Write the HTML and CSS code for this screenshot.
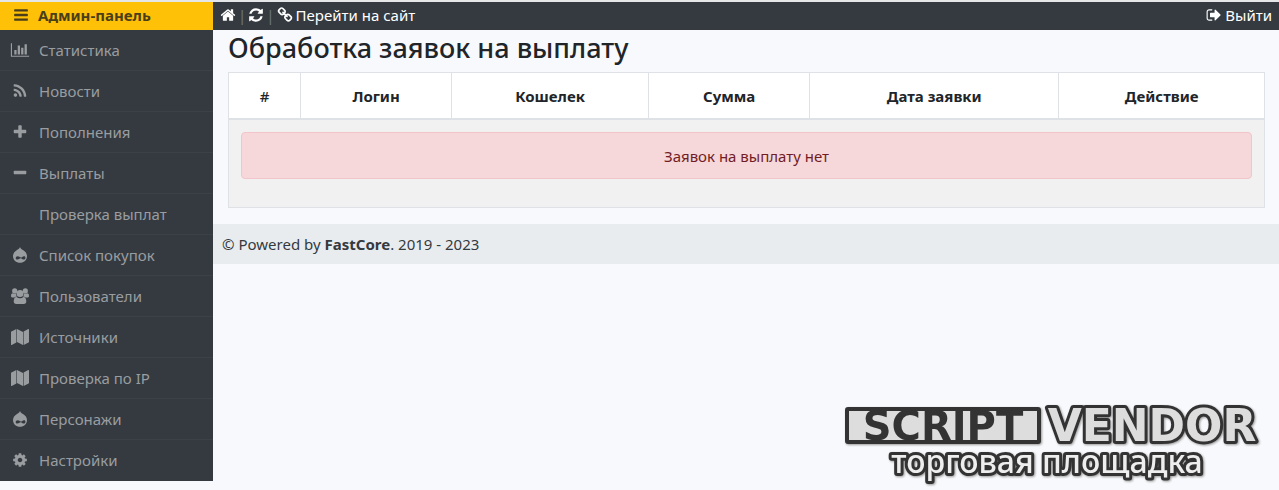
FILE: index.html
```html
<!DOCTYPE html>
<html lang="ru">
<head>
  <meta charset="UTF-8">
  <meta name="viewport" content="width=device-width, initial-scale=1.0">
  <title>Админ-панель</title>
  <link rel="stylesheet" href="styles.css">
</head>
<body>

  <!-- Icons -->
  <svg class="sprite" aria-hidden="true">
    <symbol id="bars" viewBox="0 0 1792 1792"><path d="M1664 1344v128q0 26-19 45t-45 19h-1408q-26 0-45-19t-19-45v-128q0-26 19-45t45-19h1408q26 0 45 19t19 45zm0-512v128q0 26-19 45t-45 19h-1408q-26 0-45-19t-19-45v-128q0-26 19-45t45-19h1408q26 0 45 19t19 45zm0-512v128q0 26-19 45t-45 19h-1408q-26 0-45-19t-19-45v-128q0-26 19-45t45-19h1408q26 0 45 19t19 45z"/></symbol>
    <symbol id="chart" viewBox="0 0 2048 1792"><path d="M640 896v512h-256v-512h256zm384-512v1024h-256v-1024h256zm1024 1152v128h-2048v-1536h128v1408h1920zm-640-896v768h-256v-768h256zm384-384v1152h-256v-1152h256z"/></symbol>
    <symbol id="rss" viewBox="0 0 1792 1792"><path d="M576 1344q0 80-56 136t-136 56-136-56-56-136 56-136 136-56 136 56 56 136zm512 123q2 28-17 48-18 21-47 21h-135q-25 0-43-16.500t-20-41.500q-22-229-184.500-391.500t-391.500-184.500q-25-2-41.500-20t-16.500-43v-135q0-29 21-47 17-17 43-17h5q160 13 306 80.500t259 181.500q114 113 181.500 259t80.500 306zm512 2q2 27-18 47-18 20-46 20h-143q-26 0-44.500-17.500t-19.500-42.500q-12-215-101-408.500t-231.500-336-336-231.500-408.500-102q-25-1-42.500-19.500t-17.500-43.500v-143q0-28 20-46 18-18 44-18h3q262 13 501.500 120t425.500 294q187 186 294 425.500t120 501.500z"/></symbol>
    <symbol id="plus" viewBox="0 0 1792 1792"><path d="M1600 736v192q0 40-28 68t-68 28h-416v416q0 40-28 68t-68 28h-192q-40 0-68-28t-28-68v-416h-416q-40 0-68-28t-28-68v-192q0-40 28-68t68-28h416v-416q0-40 28-68t68-28h192q40 0 68 28t28 68v416h416q40 0 68 28t28 68z"/></symbol>
    <symbol id="minus" viewBox="0 0 1792 1792"><path d="M1600 736v192q0 40-28 68t-68 28h-1216q-40 0-68-28t-28-68v-192q0-40 28-68t68-28h1216q40 0 68 28t28 68z"/></symbol>
    <symbol id="drop" viewBox="0 0 16 16"><path fill-rule="evenodd" d="M8 0C8.400 1.600 9.600 2.200 11 3C13.400 4.400 15 6.500 15 9.200C15 13 11.900 15.700 8 15.700S1 13 1 9.200C1 6.500 2.600 4.400 5 3C6.500 2.100 7.500 1.500 8 0zM5.800 9.300C4.400 9.300 3.700 10.200 3.700 11.200C3.700 12.200 4.600 12.700 5.500 12.600C7 12.400 7.800 11.200 8.700 11.200C9.800 11.200 10.600 12.600 11.800 12.600C12.900 12.600 13.500 11.500 13.400 10.400C13.300 9.200 12.500 9 11.800 9.200C10.700 9.600 9.900 10.500 8.900 10.500C7.800 10.500 7 9.300 5.800 9.300z"/></symbol>
    <symbol id="users" viewBox="0 0 18 16"><circle cx="3.700" cy="2.900" r="2.600"/><circle cx="14.300" cy="2.900" r="2.600"/><path d="M1.800 5.300C2.800 6 4.100 6 5 5.500C5 7 5.500 8 6 8.600C5 8.600 4.200 8.900 3.500 9.500H2C.8 9.500 0 8.900 0 7.900C0 6.600.5 5.300 1.800 5.300zM16.200 5.300C15.200 6 13.900 6 13 5.500C13 7 12.500 8 12 8.600C13 8.600 13.800 8.900 14.500 9.500H16C17.200 9.500 18 8.900 18 7.900C18 6.600 17.500 5.300 16.200 5.300z"/><circle cx="9" cy="5.400" r="3.500"/><path d="M5.600 8.900C7.500 10.600 10.500 10.600 12.400 8.900C14.400 8.900 15.300 11 15.300 13.500C15.300 15 14.400 16 12.800 16H5.200C3.600 16 2.700 15 2.700 13.500C2.700 11 3.600 8.900 5.600 8.900z"/></symbol>
    <symbol id="map" viewBox="0 0 18 16"><path d="M5.400 0V13.600L.7 15.900Q0 16 0 15.400V3Q0 2.600.4 2.400zM6 0L12 2.900V16L6 13.100zM17.300.1Q18 0 18 .6V13Q18 13.400 17.600 13.600L12.600 16V2.500z"/></symbol>
    <symbol id="cog" viewBox="0 0 1792 1792"><path d="M1152 896q0-106-75-181t-181-75-181 75-75 181 75 181 181 75 181-75 75-181zm512-109v222q0 12-8 23t-20 13l-185 28q-19 54-39 91 35 50 107 138 10 12 10 25t-9 23q-27 37-99 108t-94 71q-12 0-26-9l-138-108q-44 23-91 38-16 136-29 186-7 28-36 28h-222q-14 0-24.500-8.500t-11.500-21.500l-28-184q-49-16-90-37l-141 107q-10 9-25 9-14 0-25-11-126-114-165-168-7-10-7-23 0-12 8-23 15-21 51-66.500t54-70.500q-27-50-41-99l-183-27q-13-2-21-12.500t-8-23.500v-222q0-12 8-23t19-13l186-28q14-46 39-92-40-57-107-138-10-12-10-24 0-10 9-23 26-36 98.500-107.500t94.500-71.500q13 0 26 10l138 107q44-23 91-38 16-136 29-186 7-28 36-28h222q14 0 24.500 8.500t11.500 21.500l28 184q49 16 90 37l142-107q9-9 24-9 13 0 25 10 129 119 165 170 7 8 7 22 0 12-8 23-15 21-51 66.500t-54 70.500q26 50 41 98l183 28q13 2 21 12.500t8 23.500z"/></symbol>
    <symbol id="home" viewBox="0 0 1792 1792"><path d="M1472 992v480q0 26-19 45t-45 19h-384v-384h-256v384h-384q-26 0-45-19t-19-45v-480q0-1 .5-3t.5-3l575-474 575 474q1 2 1 6zm223-69l-62 74q-8 9-21 11h-3q-13 0-21-7l-692-577-692 577q-12 8-24 7-13-2-21-11l-62-74q-8-10-7-23.500t11-21.500l719-599q32-26 76-26t76 26l244 204v-195q0-14 9-23t23-9h192q14 0 23 9t9 23v408l219 182q10 8 11 21.500t-7 23.500z"/></symbol>
    <symbol id="refresh" viewBox="0 0 1792 1792"><path d="M1639 1056q0 5-1 7-64 268-268 434.500t-478 166.500q-146 0-282.500-55t-243.500-157l-129 129q-19 19-45 19t-45-19-19-45v-448q0-26 19-45t45-19h448q26 0 45 19t19 45-19 45l-137 137q71 66 161 102t187 36q134 0 250-65t186-179q11-17 53-117 8-23 30-23h192q13 0 22.500 9.500t9.500 22.500zm25-800v448q0 26-19 45t-45 19h-448q-26 0-45-19t-19-45 19-45l138-138q-148-137-349-137-134 0-250 65t-186 179q-11 17-53 117-8 23-30 23h-199q-13 0-22.500-9.500t-9.500-22.500v-7q65-268 270-434.500t480-166.500q146 0 284 55.500t245 156.500l130-129q19-19 45-19t45 19 19 45z"/></symbol>
    <symbol id="link" viewBox="0 0 1792 1792"><path d="M1520 1216q0-40-28-68l-208-208q-28-28-68-28-42 0-72 32 3 3 19 18.500t21.500 21.500 15 19 13 25.500 3.500 27.500q0 40-28 68t-68 28q-15 0-27.500-3.500t-25.500-13-19-15-21.500-21.500-18.500-19q-33 31-33 73 0 40 28 68l206 207q27 27 68 27 40 0 68-26l147-146q28-28 28-67zm-703-705q0-40-28-68l-206-207q-28-28-68-28-39 0-68 27l-147 146q-28 28-28 67 0 40 28 68l208 208q27 27 68 27 42 0 72-31-3-3-19-18.500t-21.500-21.500-15-19-13-25.500-3.500-27.500q0-40 28-68t68-28q15 0 27.500 3.500t25.500 13 19 15 21.500 21.500 18.500 19q33-31 33-73zm895 705q0 120-85 203l-147 146q-83 83-203 83-121 0-204-85l-206-207q-83-83-83-203 0-123 88-209l-88-88q-86 88-208 88-120 0-204-84l-208-208q-84-84-84-204t85-203l147-146q83-83 203-83 121 0 204 85l206 207q83 83 83 203 0 123-88 209l88 88q86-88 208-88 120 0 204 84l208 208q84 84 84 204z"/></symbol>
    <symbol id="logout" viewBox="0 0 1792 1792"><path d="M704 1440q0 4 1 20t.5 26.500-3 23.500-10 19.500-20.500 6.500h-320q-119 0-203.500-84.500t-84.500-203.500v-704q0-119 84.500-203.500t203.500-84.500h320q13 0 22.500 9.500t9.500 22.500q0 4 1 20t.5 26.500-3 23.500-10 19.500-20.500 6.500h-320q-66 0-113 47t-47 113v704q0 66 47 113t113 47h312l11.500 1 11.500 3 8 5.500 7 9 2 13.500zm928-544q0 26-19 45l-544 544q-19 19-45 19t-45-19-19-45v-288h-448q-26 0-45-19t-19-45v-384q0-26 19-45t45-19h448v-288q0-26 19-45t45-19 45 19l544 544q19 19 19 45z"/></symbol>
  </svg>

  <div class="wrapper">

    <!-- Menu -->
    <nav class="sidebar">
      <a href="#" class="brand"><svg class="icon"><use href="#bars"/></svg>Админ-панель</a>
      <ul>
        <li><a href="#"><svg class="icon wide"><use href="#chart"/></svg>Статистика</a></li>
        <li><a href="#"><svg class="icon"><use href="#rss"/></svg>Новости</a></li>
        <li><a href="#"><svg class="icon"><use href="#plus"/></svg>Пополнения</a></li>
        <li><a href="#"><svg class="icon"><use href="#minus"/></svg>Выплаты</a></li>
        <li><a href="#"><svg class="icon"></svg>Проверка выплат</a></li>
        <li><a href="#"><svg class="icon"><use href="#drop"/></svg>Список покупок</a></li>
        <li><a href="#"><svg class="icon wide"><use href="#users"/></svg>Пользователи</a></li>
        <li><a href="#"><svg class="icon wide"><use href="#map"/></svg>Источники</a></li>
        <li><a href="#"><svg class="icon wide"><use href="#map"/></svg>Проверка по IP</a></li>
        <li><a href="#"><svg class="icon"><use href="#drop"/></svg>Персонажи</a></li>
        <li><a href="#"><svg class="icon"><use href="#cog"/></svg>Настройки</a></li>
      </ul>
    </nav>

    <div class="main">
      <header class="topbar">
        <a href="#" aria-label="Главная"><svg class="icon"><use href="#home"/></svg></a>
        <span class="sep">|</span>
        <a href="#" aria-label="Обновить"><svg class="icon"><use href="#refresh"/></svg></a>
        <span class="sep">|</span>
        <a href="#"><svg class="icon"><use href="#link"/></svg>Перейти на сайт</a>
        <a href="#" class="logout"><svg class="icon"><use href="#logout"/></svg>Выйти</a>
      </header>

      <main class="content">
        <h1>Обработка заявок на выплату</h1>
        <table>
          <thead>
            <tr>
              <th class="num">#</th>
              <th>Логин</th>
              <th>Кошелек</th>
              <th>Сумма</th>
              <th>Дата заявки</th>
              <th>Действие</th>
            </tr>
          </thead>
          <tbody>
            <tr>
              <td colspan="6"><div class="alert">Заявок на выплату нет</div></td>
            </tr>
          </tbody>
        </table>
      </main>

      <footer class="footer">© Powered by <b>FastCore</b>. 2019 - 2023</footer>
    </div>
  </div>

  <!-- Watermark -->
  <svg class="watermark" viewBox="0 0 424 80">
    <rect class="plate" x="3" y="5" width="192" height="33" rx="1"/>
    <text class="word dark" x="99" y="36">SCRIPT</text>
    <text class="word light" x="308" y="37">VENDOR</text>
    <text class="sub" x="203" y="69">торговая площадка</text>
  </svg>

</body>
</html>
```
FILE: styles.css
```css
* {
  box-sizing: border-box;
}

body {
  margin: 0;
  border-top: 2px solid #e4e6e8;
  background: #f8f9fc;
  color: #212529;
  font-family: "Noto Sans", "Open Sans", sans-serif;
  font-size: 15px;
  line-height: 22px;
}

a {
  color: inherit;
  text-decoration: none;
}

.sprite {
  display: none;
}

.icon {
  width: 16px;
  height: 16px;
  flex: none;
  fill: currentColor;
}

.wrapper {
  display: flex;
  align-items: flex-start;
}

/* Sidebar */
.sidebar {
  flex: none;
  width: 16.66%;
  background: #343a40;
  color: #9a9da0;
}

.sidebar ul {
  list-style: none;
  margin: 0;
  padding: 0;
}

.sidebar li {
  border-bottom: 1px solid #3b4147;
}

.sidebar li:last-child {
  border-bottom-color: #343a40;
}

.sidebar li a {
  display: flex;
  align-items: center;
  gap: 11px;
  height: 40px;
  padding: 0 12px;
}

.sidebar .wide {
  width: 20px;
  margin: 0 -2px;
}

.brand {
  display: flex;
  align-items: center;
  gap: 9px;
  height: 28px;
  padding: 0 13px 3px;
  background: #ffc107;
  color: #4a3f1a;
  font-weight: 700;
}

/* Main column */
.main {
  flex: 1;
  min-width: 0;
}

.topbar {
  display: flex;
  align-items: center;
  gap: 2px;
  height: 28px;
  padding: 0 7px 3px;
  background: #343a40;
  color: #fff;
}

.topbar a {
  display: flex;
  align-items: center;
  gap: 3px;
}

.topbar .sep {
  color: #6c757d;
}

.topbar .logout {
  margin-left: auto;
}

.content {
  padding: 0 14px 16px 15px;
}

h1 {
  margin: 0;
  padding: 1px 0 7px;
  font-size: 27px;
  font-weight: 500;
  line-height: 34px;
}

table {
  width: 100%;
  border-collapse: collapse;
  text-align: center;
}

th, td {
  padding: 12px;
  border: 1px solid #dee2e6;
}

th {
  padding-bottom: 11px;
  background: #fff;
  border-bottom-width: 2px;
  font-weight: 700;
}

.num {
  font-weight: 500;
}

td {
  background: #f1f1f1;
}

.alert {
  margin-bottom: 16px;
  padding: 12px 12px 11px;
  border: 1px solid #f1c5ca;
  border-radius: 4px;
  background: #f6d7da;
  color: #721c24;
}

.footer {
  padding: 9px;
  background: #e9ecef;
  color: #343a40;
}

/* Watermark */
.watermark {
  position: fixed;
  right: 11px;
  bottom: 6px;
  width: 424px;
  height: 80px;
  overflow: visible;
  filter: drop-shadow(1px 1px 1px #999);
}

.plate {
  fill: #ddd;
  stroke: #333;
  stroke-width: 4px;
}

.word,
.sub {
  text-anchor: middle;
  paint-order: stroke;
  stroke-linejoin: round;
  stroke: #333;
}

.word {
  font: bold 44px "DejaVu Sans", sans-serif;
}

.dark {
  font-size: 40px;
  fill: #333;
  stroke: none;
}

.light {
  fill: #ddd;
  stroke-width: 6px;
}

.sub {
  font: 500 32px "Noto Sans", sans-serif;
  fill: #eee;
  stroke-width: 6px;
}
```
